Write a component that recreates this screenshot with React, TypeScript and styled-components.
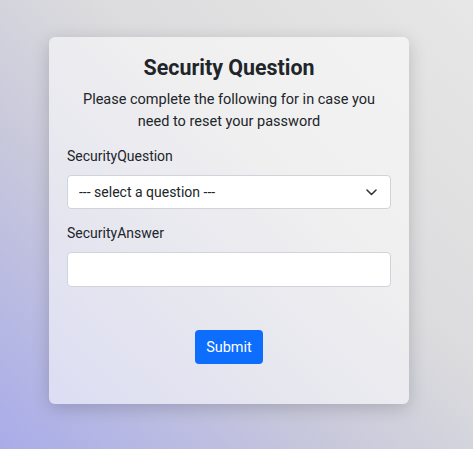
import React from "react";
import styled, { createGlobalStyle } from "styled-components";

const Global = createGlobalStyle`
  html, body { margin: 0; padding: 0; }
  body {
    font-family: Roboto, "Liberation Sans", sans-serif;
    color: #212529;
  }
  * { box-sizing: border-box; }
`;

const Page = styled.div`
  width: 473px;
  height: 449px;
  padding: 37px 0 0 49px;
  background: linear-gradient(to top right, #a9ace9 0%, #c8c8dc 35%, #dcdcde 60%, #e7e7e7 100%);
  overflow: hidden;
`;

const Card = styled.form`
  width: 360px;
  height: 367px;
  padding: 18px 18px 0 18px;
  border-radius: 6px;
  background: rgba(255, 255, 255, 0.55);
  box-shadow: 0 4px 18px rgba(0, 0, 0, 0.18);
  display: flex;
  flex-direction: column;
`;

const Title = styled.h2`
  margin: 0;
  text-align: center;
  font-size: 21.4px;
  font-weight: 700;
  line-height: 26px;
  color: #212529;
`;

const Subtitle = styled.p`
  margin: 8px 0 0;
  text-align: center;
  font-size: 14.5px;
  line-height: 22px;
  color: #212529;
`;

const Field = styled.div<{ $top: number }>`
  display: flex;
  flex-direction: column;
  margin-top: ${(p) => p.$top}px;
`;

const Label = styled.label`
  font-size: 14px;
  line-height: 20px;
  margin-bottom: 9px;
  color: #212529;
`;

const SelectBox = styled.div`
  position: relative;
  height: 34px;
  background: #fff;
  border: 1px solid #ced4da;
  border-radius: 4px;
  display: flex;
  align-items: center;
  padding: 0 11px;
  font-size: 14px;
  color: #212529;
`;

const Chevron = styled.svg`
  position: absolute;
  right: 13px;
  top: 13px;
`;

const Input = styled.input`
  height: 35px;
  background: #fff;
  border: 1px solid #ced4da;
  border-radius: 4px;
  font-size: 14px;
  padding: 0 11px;
  outline: none;
`;

const Actions = styled.div`
  display: flex;
  justify-content: center;
  margin-top: 43px;
`;

const Button = styled.button`
  height: 34px;
  padding: 0 11px;
  background: #0d6efd;
  color: #fff;
  border: none;
  border-radius: 4px;
  font-family: Roboto, "Liberation Sans", sans-serif;
  font-size: 14.5px;
`;

export default function App() {
  return (
    <>
      <Global />
      <Page>
        <Card onSubmit={(e) => e.preventDefault()}>
          <Title>Security Question</Title>
          <Subtitle>
            Please complete the following for in case you
            <br />
            need to reset your password
          </Subtitle>
          <Field $top={13}>
            <Label>SecurityQuestion</Label>
            <SelectBox>
              --- select a question ---
              <Chevron width="11" height="7" viewBox="0 0 11 7">
                <path d="M1 1l4.5 4.5L10 1" fill="none" stroke="#343a40" strokeWidth="1.6" strokeLinecap="round" strokeLinejoin="round" />
              </Chevron>
            </SelectBox>
          </Field>
          <Field $top={14}>
            <Label>SecurityAnswer</Label>
            <Input type="text" />
          </Field>
          <Actions>
            <Button type="submit">Submit</Button>
          </Actions>
        </Card>
      </Page>
    </>
  );
}
